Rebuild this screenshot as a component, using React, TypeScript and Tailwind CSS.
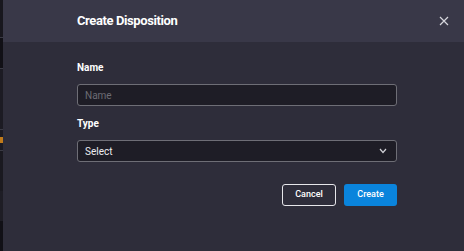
import React from "react";

export default function App() {
  return (
    <div className="w-[464px] h-[251px] flex bg-[#16151c] overflow-hidden" style={{ fontFamily: "Roboto, 'Noto Sans', sans-serif" }}>
      <div className="w-[3px] flex flex-col bg-[#1b1a22]">
        <div className="h-[37px] bg-[#18171e]" />
        <div className="h-px bg-[#3a3a44]" />
        <div className="h-[30px] bg-[#111016]" />
        <div className="h-px bg-[#3a3a44]" />
        <div className="h-[60px] bg-[#1c1b23]" />
        <div className="h-px bg-[#3a3a44]" />
        <div className="h-[7px] bg-[#1c1b23]" />
        <div className="h-[6px] bg-[#c07a1a]" />
        <div className="h-[7px] bg-[#1c1b23]" />
        <div className="h-px bg-[#3a3a44]" />
        <div className="h-[40px] bg-[#1a1920]" />
        <div className="h-[30px] bg-[#1e1d25]" />
        <div className="flex-1 bg-[#111016]" />
      </div>
      <div className="flex-1 flex flex-col bg-[#2e2d3a]">
        <div className="h-[42px] bg-[#393848] flex items-center pl-[74px] pr-[15px]">
          <div className="flex-1 text-[13px] font-bold text-white tracking-[-0.4px]">Create Disposition</div>
          <svg width="10" height="10" viewBox="0 0 10 10" className="text-[#d6d6dc]">
            <path d="M1 1 L9 9 M9 1 L1 9" stroke="currentColor" strokeWidth="1.2" />
          </svg>
        </div>
        <div className="pl-[74px] pr-[67px] pt-[20px] flex flex-col">
          <div className="text-[10px] font-bold text-white leading-[12px]">Name</div>
          <div className="mt-[10px] h-[22px] rounded-[3px] border border-[#6e6e76] bg-[#1e1d26] flex items-center px-[7px]">
            <span className="text-[10px] text-[#6c6c74]">Name</span>
          </div>
          <div className="mt-[12px] text-[10px] font-bold text-white leading-[12px]">Type</div>
          <div className="mt-[10px] h-[22px] rounded-[3px] border border-[#6e6e76] bg-[#1e1d26] flex items-center pl-[7px] pr-[9px]">
            <span className="flex-1 text-[10px] text-[#ececf0]">Select</span>
            <svg width="8" height="6" viewBox="0 0 8 6">
              <path d="M1 1 L4 4.5 L7 1" stroke="#d0d0d6" strokeWidth="1.2" fill="none" />
            </svg>
          </div>
          <div className="mt-[22px] flex justify-end gap-[8px]">
            <div className="w-[54px] h-[22px] rounded-[3px] border border-[#e6e6ea] flex items-center justify-center text-[9px] font-medium text-white">Cancel</div>
            <div className="w-[53px] h-[22px] rounded-[3px] bg-[#0a84dc] flex items-center justify-center text-[9px] font-medium text-white">Create</div>
          </div>
        </div>
      </div>
    </div>
  );
}
